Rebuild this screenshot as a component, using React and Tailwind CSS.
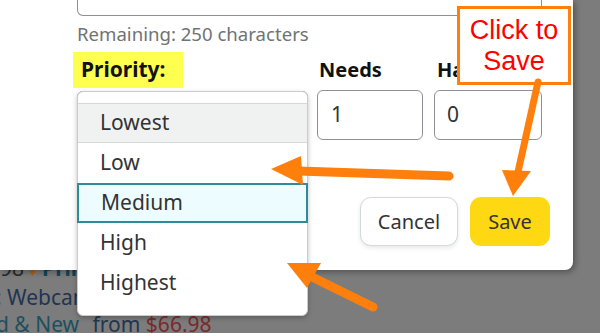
import React from 'react'

const font = { fontFamily: '"Noto Sans", "Open Sans", sans-serif' }

// ── Priority dropdown (open popover) ─────────────────────────────────────────
function PriorityList() {
  const items = ['Lowest', 'Low', 'Medium', 'High', 'Highest']
  return (
    <div className="absolute left-[77px] top-[91px] z-20 w-[231px] h-[225px] bg-white border border-[#c8cccc] rounded-[6px] shadow-[0_2px_5px_rgba(0,0,0,0.25)] pt-[11px]">
      {items.map(it => {
        let cls = 'h-[40px] flex items-center pl-[22px] text-[21px] text-[#333]'
        if (it === 'Lowest') cls += ' bg-[#f0f2f2] border-y border-[#d5d9d9] h-[38px]'
        if (it === 'Medium') cls += ' bg-[#edfdff] border-2 border-[#2e8b98] pl-[20px] h-[39px] -mx-px'
        return <div key={it} className={cls}>{it}</div>
      })}
    </div>
  )
}

// ── Annotation arrows ────────────────────────────────────────────────────────
function Arrows() {
  const c = '#fe7f0c'
  return (
    <svg className="absolute inset-0 z-30 pointer-events-none" width="600" height="333" viewBox="0 0 600 333">
      {/* to "Low" */}
      <line x1="449" y1="176" x2="298" y2="171" stroke={c} strokeWidth="9" strokeLinecap="round" />
      <polygon points="271,169 301,156 303,185" fill={c} />
      {/* to "High" */}
      <line x1="373" y1="307" x2="310" y2="276" stroke={c} strokeWidth="9" strokeLinecap="round" />
      <polygon points="287,263 321,263 307,288" fill={c} />
      {/* from callout to Save */}
      <line x1="538" y1="82" x2="518" y2="172" stroke={c} strokeWidth="7" strokeLinecap="round" />
      <polygon points="513,196 502,170 531,171" fill={c} />
    </svg>
  )
}

export default function App() {
  return (
    <div className="relative w-[600px] h-[333px] overflow-hidden bg-[#7c7c7c]" style={font}>
      {/* Modal */}
      <div className="relative z-10 w-[573px] h-[270px] bg-white rounded-br-[8px] shadow-[2px_2px_6px_rgba(0,0,0,0.35)] pl-[77px]">
        {/* textarea bottom edge */}
        <div className="w-[465px] h-[16px] border-x border-b border-[#8d9096] rounded-b-[6px]" />
        <p className="mt-[7px] text-[18.6px] leading-[22px] text-[#6f7373]">Remaining: 250 characters</p>

        <div className="flex mt-[7px]">
          {/* Priority */}
          <div className="w-[240px]">
            <div className="-ml-[4px] w-[110px] h-[36px] bg-[#ffff4f] flex items-center pl-[8px]">
              <span className="text-[21px] font-bold text-[#111]">Priority:</span>
            </div>
            <div className="mt-[3px] w-[231px] h-[49px] border border-[#8d9096] rounded-[6px]" />
          </div>
          {/* Needs */}
          <div className="w-[117px]">
            <div className="h-[36px] flex items-center pl-[2px]">
              <span className="text-[20px] font-bold text-[#111]">Needs</span>
            </div>
            <div className="mt-[2px] w-[106px] h-[50px] border border-[#8d9096] rounded-[6px] flex items-center pl-[13px] text-[21px] text-[#333]">1</div>
          </div>
          {/* Has */}
          <div className="w-[108px]">
            <div className="h-[36px] flex items-center pl-[3px]">
              <span className="text-[20px] font-bold text-[#111]">Has</span>
            </div>
            <div className="mt-[2px] w-[108px] h-[50px] border border-[#8d9096] rounded-[6px] flex items-center pl-[12px] text-[21px] text-[#333]">0</div>
          </div>
        </div>

        {/* Buttons */}
        <div className="flex justify-end gap-[12px] w-[473px] mt-[57px]">
          <button className="w-[98px] h-[49px] rounded-[11px] bg-white border border-[#d5d9d9] shadow-[0_2px_4px_rgba(213,217,217,0.6)] text-[20px] text-[#333]">Cancel</button>
          <button className="w-[80px] h-[49px] rounded-[11px] bg-[#ffd814] text-[20px] text-[#333]">Save</button>
        </div>
      </div>

      {/* Page behind the overlay */}
      <div className="relative -mt-[15px] text-[21px] leading-[27px] whitespace-nowrap">
        <div className="text-[#2a2a2a]">
          98 <span className="text-[#b0621a] text-[14px]">♦</span> <span className="text-[#0d4a5a] font-bold">Prime</span>
        </div>
        <div className="-ml-[4px] text-[#1f3450]">: Webcam</div>
        <div className="-ml-[4px] text-[#1e4f5e]">
          d &amp; New <span className="ml-[8px] text-[#23364f]">from</span> <span className="text-[#7a2a2a]">$66.98</span>
        </div>
      </div>

      <PriorityList />

      {/* Callout */}
      <div className="absolute left-[457px] top-[6px] z-30 w-[114px] h-[79px] bg-white border-[3px] border-[#fe7f0c] flex flex-col items-center justify-center text-[27px] leading-[31px] text-[#ff0000]" style={{ fontFamily: '"Liberation Sans", Arial, sans-serif' }}>
        <span>Click to</span>
        <span>Save</span>
      </div>

      <Arrows />
    </div>
  )
}
